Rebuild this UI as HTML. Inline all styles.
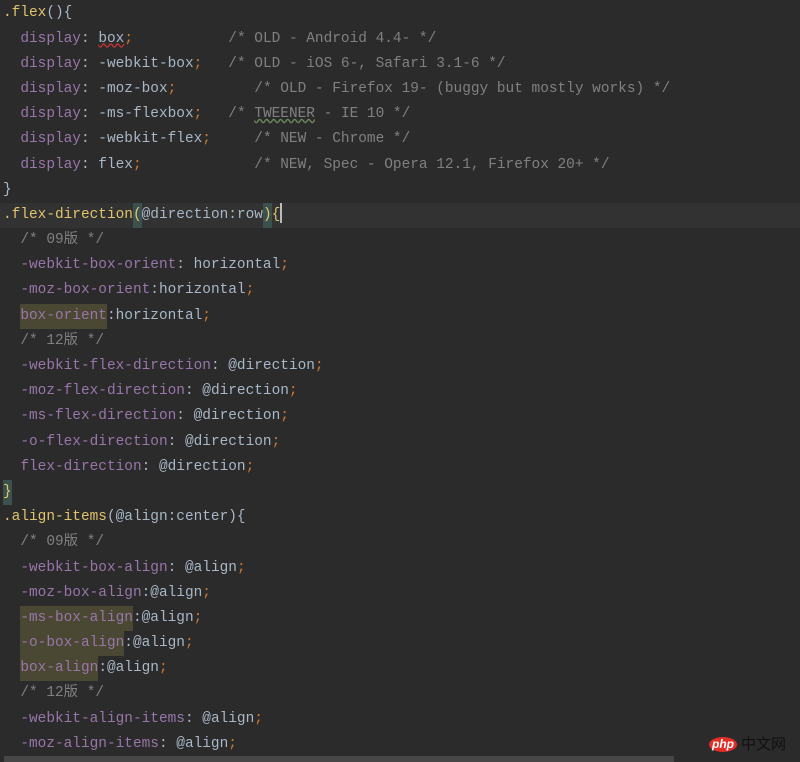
<!DOCTYPE html>
<html><head><meta charset="utf-8"><style>
body{margin:0;width:800px;height:762px;background:#2b2b2b;overflow:hidden;position:relative}
.c{position:absolute;left:3px;top:1.4px;font-family:"Liberation Mono","Noto Sans CJK SC",monospace;font-size:14.45px;line-height:25.2px;color:#a9b7c6}
.l{height:25.2px;position:relative;white-space:pre}
.s{color:#e0c46c}.p{color:#9876aa}.k{color:#cc7832}.m{color:#808080}.v{color:#a9b7c6}
.h{background:#4a4832;display:inline-block;height:25.2px;vertical-align:top}
.b{background:#3b514d;display:inline-block;height:25.2px;vertical-align:top}
.cur{background:#323232;margin-left:-3px;padding-left:3px;width:800px}
</style></head><body>
<div class="c"><div class="l"><span class="s">.flex</span><span class="v">(){</span></div><div class="l">  <span class="p">display</span>: <span style="text-decoration:underline wavy #b33">box</span><span class="k">;</span>           <span class="m">/* OLD - Android 4.4- */</span></div><div class="l">  <span class="p">display</span>: -webkit-box<span class="k">;</span>   <span class="m">/* OLD - iOS 6-, Safari 3.1-6 */</span></div><div class="l">  <span class="p">display</span>: -moz-box<span class="k">;</span>         <span class="m">/* OLD - Firefox 19- (buggy but mostly works) */</span></div><div class="l">  <span class="p">display</span>: -ms-flexbox<span class="k">;</span>   <span class="m">/* <span style="text-decoration:underline wavy #6a8759">TWEENER</span> - IE 10 */</span></div><div class="l">  <span class="p">display</span>: -webkit-flex<span class="k">;</span>     <span class="m">/* NEW - Chrome */</span></div><div class="l">  <span class="p">display</span>: flex<span class="k">;</span>             <span class="m">/* NEW, Spec - Opera 12.1, Firefox 20+ */</span></div><div class="l">}</div><div class="l cur"><span class="s">.flex-direction</span><span class="b" style="color:#e0c46c">(</span>@direction:row<span class="b" style="color:#e0c46c">)</span><span style="color:#e0c46c">{</span><span style="display:inline-block;width:2px;height:20px;background:#bbb;vertical-align:-5px"></span></div><div class="l">  <span class="m">/* 09版 */</span></div><div class="l">  <span class="p">-webkit-box-orient</span>: horizontal<span class="k">;</span></div><div class="l">  <span class="p">-moz-box-orient</span>:horizontal<span class="k">;</span></div><div class="l">  <span class="p h">box-orient</span>:horizontal<span class="k">;</span></div><div class="l">  <span class="m">/* 12版 */</span></div><div class="l">  <span class="p">-webkit-flex-direction</span>: @direction<span class="k">;</span></div><div class="l">  <span class="p">-moz-flex-direction</span>: @direction<span class="k">;</span></div><div class="l">  <span class="p">-ms-flex-direction</span>: @direction<span class="k">;</span></div><div class="l">  <span class="p">-o-flex-direction</span>: @direction<span class="k">;</span></div><div class="l">  <span class="p">flex-direction</span>: @direction<span class="k">;</span></div><div class="l"><span class="b" style="color:#e0c46c">}</span></div><div class="l"><span class="s">.align-items</span>(@align:center){</div><div class="l">  <span class="m">/* 09版 */</span></div><div class="l">  <span class="p">-webkit-box-align</span>: @align<span class="k">;</span></div><div class="l">  <span class="p">-moz-box-align</span>:@align<span class="k">;</span></div><div class="l">  <span class="p h">-ms-box-align</span>:@align<span class="k">;</span></div><div class="l">  <span class="p h">-o-box-align</span>:@align<span class="k">;</span></div><div class="l">  <span class="p h">box-align</span>:@align<span class="k">;</span></div><div class="l">  <span class="m">/* 12版 */</span></div><div class="l">  <span class="p">-webkit-align-items</span>: @align<span class="k">;</span></div><div class="l">  <span class="p">-moz-align-items</span>: @align<span class="k">;</span></div></div>
<div style="position:absolute;left:4px;top:756px;width:670px;height:6px;background:#474747"></div>
<div style="position:absolute;left:709px;top:737px;width:28px;height:15px;border-radius:50%;background:#e52d27;color:#fff;font:italic bold 12px/15px 'Liberation Sans',sans-serif;text-align:center">php</div>
<div style="position:absolute;left:741px;top:735px;font:15px/18px 'Noto Sans CJK SC',sans-serif;color:#111">中文网</div>
</body></html>
